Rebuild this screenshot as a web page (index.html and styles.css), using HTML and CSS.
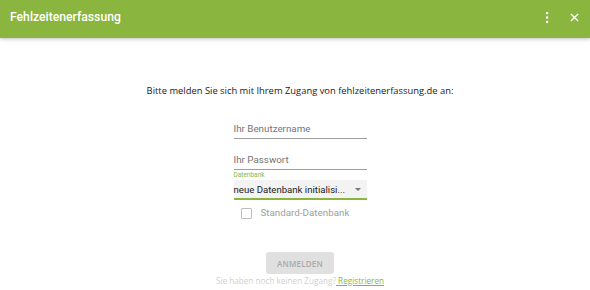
FILE: index.html
```html
<!DOCTYPE html>
<html lang="de">
<head>
  <meta charset="UTF-8" />
  <title>Fehlzeitenerfassung</title>
  <link rel="stylesheet" href="styles.css">
</head>
<body>

  <header class="toolbar">
    <span class="toolbar-title">Fehlzeitenerfassung</span>
    <div class="toolbar-actions">
      <button class="icon-btn" aria-label="Menü">
        <svg width="4" height="11" viewBox="0 0 4 11"><rect x="1" y="0" width="2.2" height="2.2" fill="#fff"/><rect x="1" y="4.4" width="2.2" height="2.2" fill="#fff"/><rect x="1" y="8.8" width="2.2" height="2.2" fill="#fff"/></svg>
      </button>
      <button class="icon-btn" aria-label="Schließen">
        <svg width="9" height="9" viewBox="0 0 10 10"><path d="M1 1 L9 9 M9 1 L1 9" stroke="#fff" stroke-width="1.5" fill="none"/></svg>
      </button>
    </div>
  </header>

  <main class="login">
    <p class="intro">Bitte melden Sie sich mit Ihrem Zugang von fehlzeitenerfassung.de an:</p>

    <div class="form">
      <div class="field">
        <input type="text" placeholder="Ihr Benutzername">
      </div>
      <div class="field">
        <input type="password" placeholder="Ihr Passwort">
      </div>
      <div class="select-field">
        <label>Datenbank</label>
        <div class="select-box">
          <span class="select-value">neue Datenbank initialisi...</span>
          <span class="select-arrow"></span>
        </div>
      </div>
      <label class="check">
        <span class="check-box"></span>
        <span>Standard-Datenbank</span>
      </label>
    </div>

    <button class="submit" disabled>ANMELDEN</button>
    <p class="register">Sie haben noch keinen Zugang?<a href="#">&nbsp;Registrieren</a></p>
  </main>

</body>
</html>
```

FILE: styles.css
```css
* { box-sizing: border-box; }

body {
  margin: 0;
  font-family: Roboto, 'Noto Sans', sans-serif;
  background-color: #fff;
  color: #212121;
  overflow: hidden;
}

.toolbar {
  height: 38px;
  background-color: #8ab53e;
  display: flex;
  align-items: center;
  justify-content: space-between;
  padding: 0 11px 0 10px;
  box-shadow: 0 1px 4px rgba(0,0,0,0.25);
}

.toolbar-title {
  color: #fff;
  font-size: 12.2px;
  font-weight: 500;
  margin-top: -4px;
}

.toolbar-actions {
  display: flex;
  align-items: center;
  gap: 21px;
  margin-top: -4px;
}

.icon-btn {
  background: none;
  border: none;
  padding: 0;
  display: flex;
  align-items: center;
  justify-content: center;
  cursor: pointer;
}

.login {
  display: flex;
  flex-direction: column;
  align-items: center;
  padding-left: 10px;
}

.intro {
  margin: 46px 0 0;
  font-family: 'Open Sans', sans-serif;
  font-size: 9.4px;
  line-height: 14px;
  color: #222;
}

.form {
  width: 133px;
  margin-top: 22px;
  display: flex;
  flex-direction: column;
}

.field input {
  display: block;
  width: 100%;
  border: none;
  border-bottom: 1px solid #9e9e9e;
  padding: 2px 0 4px;
  font-family: Roboto, sans-serif;
  font-size: 9.8px;
  line-height: 12px;
  height: 19px;
  outline: none;
  background: none;
}

.field input::placeholder { color: #757575; }

.field + .field { margin-top: 12px; }

.select-field label {
  display: block;
  font-size: 6.5px;
  color: #8ab53e;
  line-height: 8px;
  margin-top: 1px;
}

.select-box {
  margin-top: 1px;
  background-color: #f3f3f3;
  border-bottom: 2px solid #8ab53e;
  height: 20px;
  display: flex;
  align-items: center;
  justify-content: space-between;
  padding: 0 6px 0 0;
  font-size: 9.6px;
  color: #212121;
}

.select-value {
  white-space: nowrap;
}

.select-arrow {
  width: 0;
  height: 0;
  border-left: 3px solid transparent;
  border-right: 3px solid transparent;
  border-top: 3px solid #757575;
}

.check {
  display: flex;
  align-items: center;
  gap: 9px;
  margin: 7px 0 0 7px;
  font-size: 9.8px;
  line-height: 12px;
  color: #9e9e9e;
}

.check-box {
  width: 11px;
  height: 11px;
  border: 1.5px solid #bdbdbd;
  border-radius: 1px;
}

.submit {
  margin-top: 33px;
  width: 68px;
  height: 22px;
  border: none;
  border-radius: 3px;
  background-color: #e0e0e0;
  color: #a9a9a9;
  font-family: 'Open Sans', sans-serif;
  font-size: 8px;
  font-weight: 600;
  letter-spacing: 0.2px;
}

.register {
  margin: 1px 0 0;
  font-family: 'Open Sans', sans-serif;
  font-size: 8.2px;
  line-height: 11px;
  color: #d0d0d0;
}

.register a {
  color: #8ab53e;
}
```
